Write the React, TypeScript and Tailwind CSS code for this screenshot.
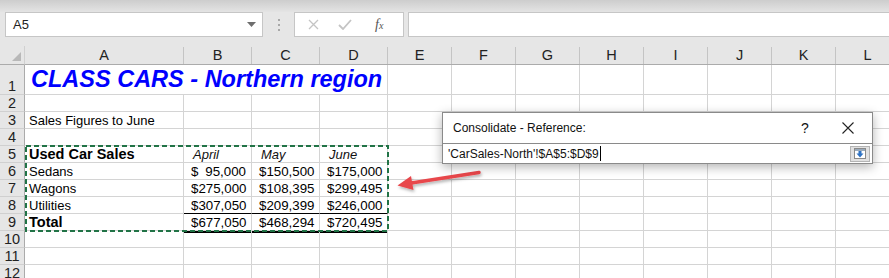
import React from 'react'

type Cell = {
  text?: string
  kind?: 'title' | 'bold' | 'month' | 'money' | 'plain'
  span?: number
  bottomBlack?: boolean
  shadowBlack?: boolean
}

const COLS = ['A', 'B', 'C', 'D', 'E', 'F', 'G', 'H', 'I', 'J', 'K', 'L']

const money = (v: string, extra: Partial<Cell> = {}): Cell => ({ text: v, kind: 'money', ...extra })

const rows: Cell[][] = [
  [{ text: 'CLASS CARS - Northern region', kind: 'title', span: 4 }],
  [],
  [{ text: 'Sales Figures to June', kind: 'plain' }],
  [],
  [
    { text: 'Used Car Sales', kind: 'bold' },
    { text: 'April', kind: 'month' },
    { text: 'May', kind: 'month' },
    { text: 'June', kind: 'month' },
  ],
  [{ text: 'Sedans', kind: 'plain' }, money('95,000'), money('150,500'), money('175,000')],
  [{ text: 'Wagons', kind: 'plain' }, money('275,000'), money('108,395'), money('299,495')],
  [
    { text: 'Utilities', kind: 'plain' },
    money('307,050', { bottomBlack: true }),
    money('209,399', { bottomBlack: true }),
    money('246,000', { bottomBlack: true }),
  ],
  [{ text: 'Total', kind: 'bold' }, money('677,050'), money('468,294'), money('720,495')],
  [{}, { shadowBlack: true }, { shadowBlack: true }, { shadowBlack: true }],
  [],
  [],
]

function CellContent({ cell }: { cell: Cell }) {
  if (!cell.text) return null
  switch (cell.kind) {
    case 'title':
      return (
        <span className="pl-[6px] pb-[1px] text-[23.5px] leading-[28px] font-bold italic text-[#0000ff] whitespace-nowrap">
          {cell.text}
        </span>
      )
    case 'bold':
      return <span className="pl-[4px] text-[14.5px] leading-[16px] font-bold">{cell.text}</span>
    case 'month':
      return <span className="pl-[9px] text-[13px] leading-[15px] italic text-[#111]">{cell.text}</span>
    case 'money':
      return (
        <span className="flex w-full justify-between pl-[7px] pr-[5px] text-[13.3px] leading-[15px]">
          <span>$</span>
          <span>{cell.text}</span>
        </span>
      )
    default:
      return <span className="pl-[4px] text-[13px] leading-[15px] whitespace-nowrap">{cell.text}</span>
  }
}

function Toolbar() {
  return (
    <div className="h-[46px] bg-[#e6e6e6] flex flex-col">
      <div className="h-[12px] bg-gradient-to-b from-[#cdcdcd] to-[#e4e4e4]" />
      <div className="h-[25px] flex items-stretch">
        <div className="ml-[5px] w-[258px] bg-white border border-[#c6c6c6] flex items-center justify-between pl-[7px] pr-[6px]">
          <span className="text-[13px] text-[#222]">A5</span>
          <svg width="9" height="5" viewBox="0 0 9 5">
            <path d="M0 0 L9 0 L4.5 5 Z" fill="#6e6e6e" />
          </svg>
        </div>
        <div className="w-[31px] flex flex-col items-center justify-center gap-[3px]">
          <span className="w-[2px] h-[2px] bg-[#a8a8a8]" />
          <span className="w-[2px] h-[2px] bg-[#a8a8a8]" />
          <span className="w-[2px] h-[2px] bg-[#a8a8a8]" />
        </div>
        <div className="w-[110px] bg-white border border-[#c6c6c6] flex items-center pl-[13px] gap-[19px]">
          <svg width="11" height="11" viewBox="0 0 11 11">
            <path d="M1 1 L10 10 M10 1 L1 10" stroke="#c4c4c4" strokeWidth="1.3" />
          </svg>
          <svg width="14" height="11" viewBox="0 0 14 11">
            <path d="M1 6 L5 10 L13 1" stroke="#c4c4c4" strokeWidth="1.8" fill="none" />
          </svg>
          <span className="ml-[4px] font-['Liberation_Serif'] italic text-[14px] text-[#555] leading-none">
            f<span className="text-[10px]">x</span>
          </span>
        </div>
        <div className="ml-[4px] flex-1 bg-white border border-[#c6c6c6] border-r-0" />
      </div>
    </div>
  )
}

function Sheet() {
  return (
    <div className="grid grid-cols-[25px_159px_68px_68px_68px_repeat(8,64px)] grid-rows-[19px_30px_repeat(11,17px)] text-black">
      {/* header row */}
      <div className="relative bg-[#e6e6e6] border-b border-[#ababab] border-r border-r-[#d0d0d0]">
        <svg className="absolute right-[3px] bottom-[3px]" width="9" height="9" viewBox="0 0 9 9">
          <path d="M9 0 L9 9 L0 9 Z" fill="#b8b8b8" />
        </svg>
      </div>
      {COLS.map((c) => (
        <div key={c} className="bg-[#e6e6e6] border-b border-[#ababab] flex items-stretch">
          <div className="flex-1 flex items-center justify-center pt-[2px] text-[14.5px] text-[#222]">{c}</div>
          <div className="w-px mt-[1px] bg-[#c4c4c4]" />
        </div>
      ))}
      {rows.map((row, ri) => {
        const cells: React.ReactNode[] = []
        cells.push(
          <div
            key={`h${ri}`}
            className="bg-[#e6e6e6] border-b border-[#d0d0d0] border-r border-r-[#ababab] flex items-end justify-center text-[14.5px] leading-[16px] text-[#222]"
          >
            {ri + 1}
          </div>
        )
        let col = 0
        while (col < COLS.length) {
          const cell = row[col] ?? {}
          const span = cell.span ?? 1
          cells.push(
            <div
              key={`${ri}-${col}`}
              className={[
                'flex items-end overflow-visible border-r border-b border-[#d4d4d4]',
                span === 4 ? 'col-span-4' : '',
                cell.bottomBlack ? 'border-b-black' : '',
                cell.shadowBlack ? 'shadow-[inset_0_2px_0_0_#000]' : '',
              ].join(' ')}
            >
              <CellContent cell={cell} />
            </div>
          )
          col += span
        }
        return cells
      })}
    </div>
  )
}

function Dialog() {
  return (
    <div className="absolute left-[442px] top-[112px] w-[431px] h-[52px] bg-white border border-[#8a8a8a] shadow-[0_3px_10px_rgba(0,0,0,0.3)] flex flex-col">
      <div className="h-[30px] flex items-center pl-[10px] text-[12px] text-[#111]">
        <span className="flex-1">Consolidate - Reference:</span>
        <span className="w-[30px] text-center text-[14px]">?</span>
        <svg className="ml-[22px] mr-[18px]" width="12" height="12" viewBox="0 0 12 12">
          <path d="M0.5 0.5 L11.5 11.5 M11.5 0.5 L0.5 11.5" stroke="#222" strokeWidth="1.1" />
        </svg>
      </div>
      <div className="flex-1 border-t border-[#8a8a8a] flex items-center pl-[5px] pr-[2px]">
        <span className="flex-1 text-[12px] leading-none text-[#111] flex items-center">
          'CarSales-North'!$A$5:$D$9
          <span className="ml-[1px] w-px h-[15px] bg-black" />
        </span>
        <div className="w-[20px] h-[16px] bg-[#e1e1e1] border border-[#b4b4b4] flex items-center justify-center">
          <svg width="12" height="11" viewBox="0 0 12 11">
            <rect x="0.5" y="0.5" width="11" height="10" fill="white" stroke="#8a8a8a" />
            <rect x="1" y="1" width="10" height="2" fill="#9ab" />
            <path d="M4.5 3 L7.5 3 L7.5 5.5 L9.5 5.5 L6 9.5 L2.5 5.5 L4.5 5.5 Z" fill="#2d72c4" />
          </svg>
        </div>
      </div>
    </div>
  )
}

function Arrow() {
  return (
    <svg className="absolute left-[390px] top-[162px]" width="100" height="40" viewBox="390 162 100 40">
      <defs>
        <filter id="sh" x="-20%" y="-50%" width="140%" height="200%">
          <feDropShadow dx="1" dy="2" stdDeviation="1.5" floodColor="#000" floodOpacity="0.3" />
        </filter>
      </defs>
      <g filter="url(#sh)">
        <path d="M479 172.5 L408 183.5" stroke="#e8474c" strokeWidth="3.5" strokeLinecap="round" />
        <path d="M397.5 185.5 L411 176 L413.5 190 Z" fill="#e8474c" />
      </g>
    </svg>
  )
}

export default function App() {
  return (
    <div className="relative w-[889px] h-[278px] overflow-hidden bg-white font-['Liberation_Sans',Arial,sans-serif]">
      <Toolbar />
      <Sheet />
      {/* copy marquee round A5:D9 */}
      <svg className="absolute left-[25px] top-[145px]" width="365" height="88">
        <rect x="1" y="1" width="362" height="85" fill="none" stroke="#217346" strokeWidth="2" strokeDasharray="5 3" />
      </svg>
      <Arrow />
      <Dialog />
    </div>
  )
}
